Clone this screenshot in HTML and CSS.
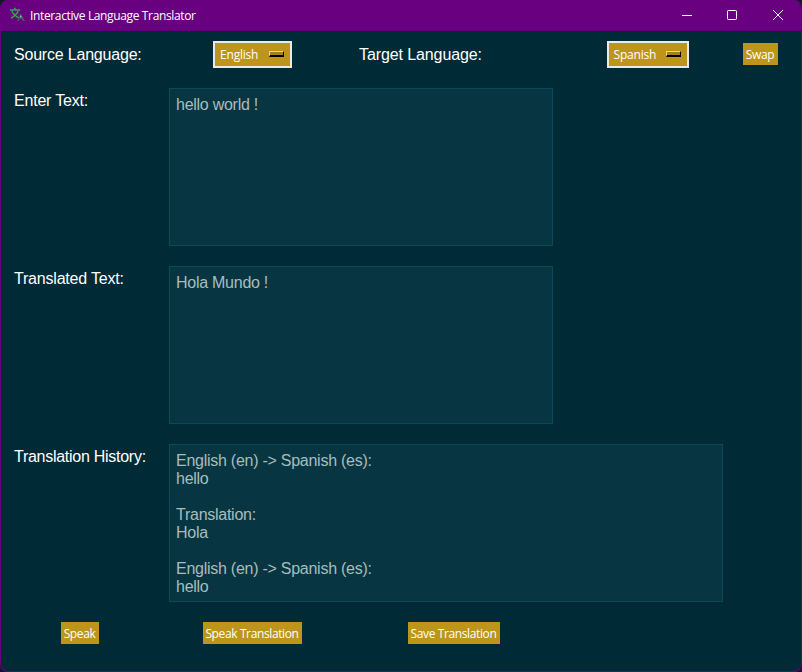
FILE: index.html
```html
<!DOCTYPE html>
<html lang="en">
<head>
<meta charset="utf-8">
<title>Interactive Language Translator</title>
<link rel="stylesheet" href="styles.css">
</head>
<body>
<div class="window">
  <header class="titlebar">
    <svg class="app-icon" width="16" height="16" viewBox="0 0 16 16" fill="none">
      <path d="M0 3H10M5 .8V3M2 4C3 7 5 9 9 11M8 4C7 7 5 9 1 11" stroke="#37a64a" stroke-width="1.5"/>
      <path d="M7 14L10 7H11.5L15 14H12.6L12 12H9.5L8.8 14Z" fill="#465563"/>
      <path d="M10 10.2L10.8 8.3L11.6 10.2Z" fill="#d6dce0"/>
    </svg>
    <span class="title">Interactive Language Translator</span>
    <div class="controls">
      <svg width="46" height="30" viewBox="0 0 46 30"><path d="M18 14.5H28" stroke="#fff"/></svg>
      <svg width="46" height="30" viewBox="0 0 46 30"><rect x="17.5" y="9.5" width="9" height="9" rx=".8" fill="none" stroke="#fff"/></svg>
      <svg width="46" height="30" viewBox="0 0 46 30"><path d="M17 9L27 19M27 9L17 19" stroke="#fff"/></svg>
    </div>
  </header>
  <main class="form">
    <label class="label middle source">Source Language:</label>
    <button class="select english"><span>English</span><i class="indicator"></i></button>
    <label class="label middle target">Target Language:</label>
    <button class="select spanish"><span>Spanish</span><i class="indicator"></i></button>
    <button class="button swap"><span>Swap</span></button>

    <label class="label enter">Enter Text:</label>
    <div class="textbox">hello world !</div>

    <label class="label translated">Translated Text:</label>
    <div class="textbox">Hola Mundo !</div>

    <label class="label history-label">Translation History:</label>
    <div class="textbox history">English (en) -&gt; Spanish (es):
hello

Translation:
Hola

English (en) -&gt; Spanish (es):
hello</div>

    <button class="button speak"><span>Speak</span></button>
    <button class="button speak-translation"><span>Speak Translation</span></button>
    <button class="button save"><span>Save Translation</span></button>
  </main>
</div>
</body>
</html>
```
FILE: styles.css
```css
* { box-sizing: border-box; }
body {
  margin: 0;
  background: #17152c;
  font-family: "Liberation Sans", Arial, sans-serif;
  overflow: hidden;
}
.window {
  width: 802px;
  height: 672px;
  border: 1px solid #69007f;
  border-top: 0;
  border-radius: 8px;
  background: #002b36;
  overflow: hidden;
}
.titlebar {
  display: flex;
  align-items: center;
  height: 31px;
  padding-left: 8px;
  background: #69007f;
}
.app-icon { flex: none; margin: -2px 4px 0 1px; }
.title {
  padding-top: 1px;
  color: #fff;
  font: 12px/16px "Open Sans", sans-serif;
  letter-spacing: -0.36px;
  white-space: nowrap;
}
.controls { display: flex; margin: 0 -1px 0 auto; }
.controls svg { display: block; }
.form {
  display: grid;
  grid-template-columns: 158px 187px 216px 171px 55px;
  grid-template-rows: 47px 178px 178px 178px 42px;
}
.label {
  padding: 14px 0 0 13px;
  color: #fff;
  font-size: 16px;
  line-height: 18px;
  letter-spacing: -0.2px;
  white-space: nowrap;
}
.middle { align-self: center; padding-top: 0; }
.target { letter-spacing: -0.1px; }
.history-label { letter-spacing: -0.27px; }
.enter, .translated, .history-label, .speak { grid-column: 1; }
.textbox {
  grid-column: 2 / 4;
  width: 384px;
  height: 158px;
  margin: 10px;
  padding: 7px 6px;
  border: 1px solid #0b4b59;
  background: #073642;
  color: #a9bdbd;
  font-size: 16px;
  line-height: 18px;
  letter-spacing: -0.26px;
  white-space: pre;
  overflow: hidden;
}
.history { grid-column: 2 / 5; width: 554px; }
.button, .select {
  display: flex;
  align-items: center;
  place-self: center;
  margin: 0;
  border: 0;
  border-radius: 0;
  background: #bd951a;
  color: #fff;
  font: 12px/16px "Open Sans", sans-serif;
  letter-spacing: -0.38px;
  white-space: nowrap;
}
.button { justify-content: center; height: 22px; padding: 1px 1px 0 0; }
.select {
  justify-content: space-between;
  height: 27px;
  padding: 0 5px;
  border: 2px solid #eee8e8;
  letter-spacing: -0.2px;
}
.select span { padding-top: 1px; }
.english { width: 79px; }
.spanish { width: 82px; }
.swap { align-self: start; width: 35px; margin-top: 12px; }
.speak { width: 38px; }
.speak-translation { width: 99px; }
.save { width: 92px; }
.indicator {
  width: 15px;
  height: 6px;
  margin: -1px 1px 0 0;
  border: 1px solid;
  border-color: #ffcf86 #000 #000 #ffcf86;
  border-bottom-width: 2px;
  background: #a57f13;
}
```
